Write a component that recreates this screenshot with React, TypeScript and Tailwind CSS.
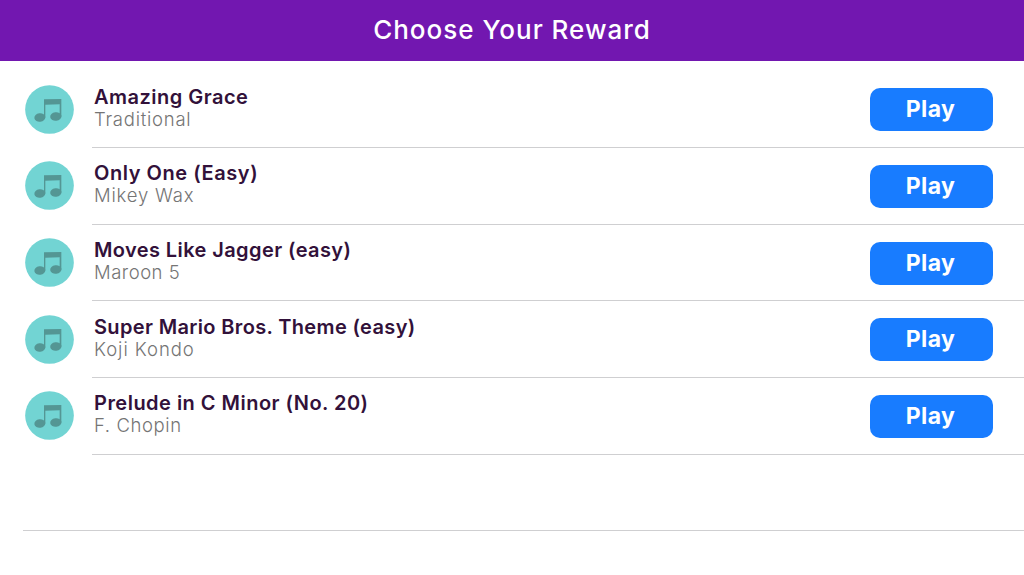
interface Song {
  title: string
  artist: string
  titleTracking: string
  artistTracking: string
}

const songs: Song[] = [
  { title: "Amazing Grace", artist: "Traditional", titleTracking: "tracking-[0.48px]", artistTracking: "tracking-[0.75px]" },
  { title: "Only One (Easy)", artist: "Mikey Wax", titleTracking: "tracking-[0.56px]", artistTracking: "tracking-[0.8px]" },
  { title: "Moves Like Jagger (easy)", artist: "Maroon 5", titleTracking: "tracking-[0.4px]", artistTracking: "tracking-[0.5px]" },
  { title: "Super Mario Bros. Theme (easy)", artist: "Koji Kondo", titleTracking: "tracking-[0.35px]", artistTracking: "tracking-[0.95px]" },
  { title: "Prelude in C Minor (No. 20)", artist: "F. Chopin", titleTracking: "tracking-[0.48px]", artistTracking: "tracking-[0.6px]" },
]

function NoteIcon() {
  return (
    <svg viewBox="0 0 147 147" className="h-[49px] w-[49px] shrink-0">
      <circle cx="73.5" cy="73.5" r="73" fill="#72d4d3" />
      <g fill="#549694">
        <path d="M57 43L109 42V95H104V58L61 59V98H57Z" />
        <ellipse cx="44.5" cy="97.5" rx="16.5" ry="12.5" transform="rotate(-8 44.5 97.5)" />
        <ellipse cx="92.5" cy="94.5" rx="17" ry="13" transform="rotate(-8 92.5 94.5)" />
      </g>
    </svg>
  )
}

function SongRow({ song }: { song: Song }) {
  return (
    <li className="flex h-[76.6px] pl-[24.5px]">
      <div className="pt-[13.2px]">
        <NoteIcon />
      </div>

      <div className="ml-[18.5px] flex flex-1 justify-between border-b border-[#cfcfd1] pl-[2px] pr-[31px]">
        <div className="pt-[14.2px] whitespace-nowrap">
          <h2 className={`text-[20px] leading-[23px] font-semibold text-[#32113a] ${song.titleTracking}`}>
            {song.title}
          </h2>
          <p className={`text-[18.5px] leading-[20px] font-light text-[#757575] ${song.artistTracking}`}>
            {song.artist}
          </p>
        </div>

        <button className="mt-[16.8px] h-[43px] w-[123px] rounded-[10px] bg-[#187cff] pr-[2px] text-[23px] leading-[43px] font-bold tracking-[0.4px] text-white">
          Play
        </button>
      </div>
    </li>
  )
}

export default function App() {
  return (
    <div className="h-[575px] w-full overflow-hidden bg-white font-['Inter',sans-serif]">
      <header className="flex h-[61px] items-center justify-center bg-[#7217b0] pb-[2px]">
        <h1 className="text-[26px] leading-[30px] font-medium tracking-[1px] text-white">
          Choose Your Reward
        </h1>
      </header>

      <ul className="pt-[10.6px]">
        {songs.map((song) => (
          <SongRow key={song.title} song={song} />
        ))}
        {/* empty slot */}
        <li className="ml-[23px] h-[76.6px] border-b border-[#cfcfd1]" />
      </ul>
    </div>
  )
}
